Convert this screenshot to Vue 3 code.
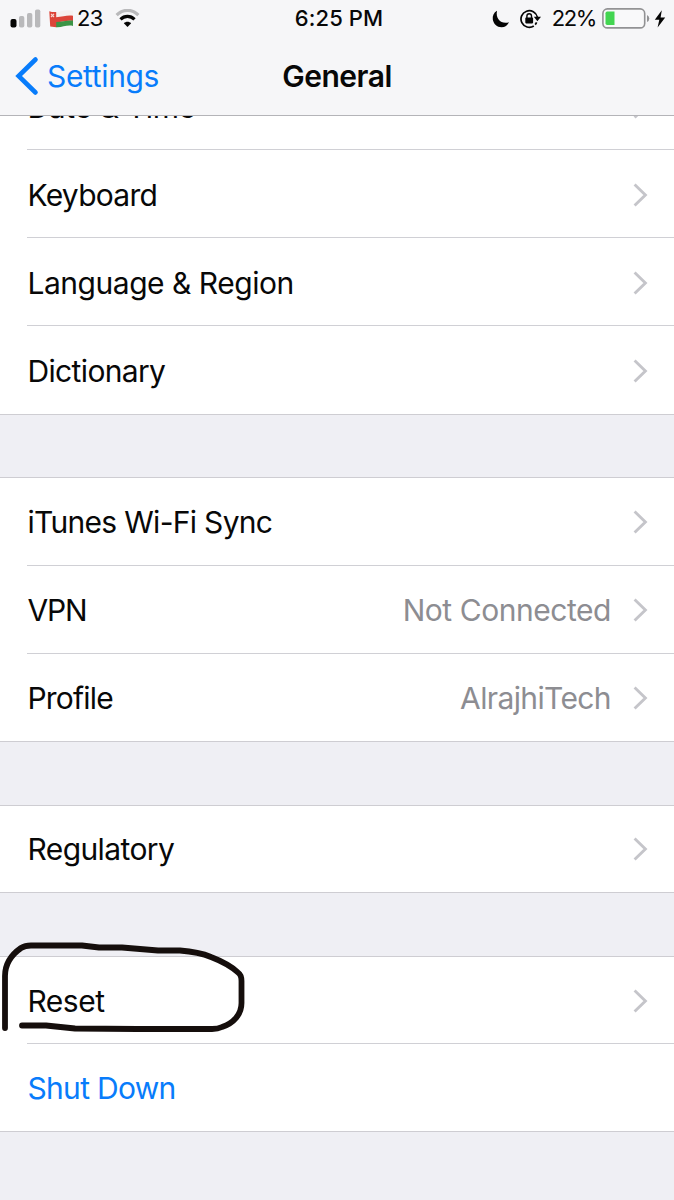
<script setup>
const groups = [
  {
    id: 'locale',
    rows: [
      { label: 'Date & Time', spacing: -0.35 },
      { label: 'Keyboard', spacing: -0.75 },
      { label: 'Language & Region', spacing: -0.48 },
      { label: 'Dictionary', spacing: -0.65 },
    ],
  },
  {
    id: 'network',
    rows: [
      { label: 'iTunes Wi-Fi Sync', spacing: -0.7 },
      { label: 'VPN', spacing: -1.2, value: 'Not Connected', valueSpacing: -0.45 },
      { label: 'Profile', spacing: -0.8, value: 'AlrajhiTech', valueSpacing: -0.62 },
    ],
  },
  { id: 'legal', rows: [{ label: 'Regulatory', spacing: -0.6 }] },
  {
    id: 'power',
    marked: true,
    rows: [
      { label: 'Reset', spacing: -0.5 },
      { label: 'Shut Down', spacing: -0.7, action: true },
    ],
  },
]
</script>

<template>
  <div class="screen">
    <header class="header">
      <div class="status">
        <div class="status-left">
          <svg class="signal" width="31" height="19" viewBox="0 0 31 19">
            <rect x="0.5" y="10" width="6" height="8.5" rx="2" fill="#050505" />
            <rect x="9" y="7" width="5.3" height="11.5" rx="1.8" fill="#b9b9bb" />
            <rect x="17" y="4" width="5.3" height="14.5" rx="1.8" fill="#b9b9bb" />
            <rect x="25" y="0.5" width="5.3" height="18" rx="1.8" fill="#b9b9bb" />
          </svg>
          <svg class="flag" width="25" height="19" viewBox="0 0 25 19">
            <path d="M0.5 2.5C6 4 9 3 13 2C17 1 21 0.8 24 1.8V7C18 6 14 8 7 8.5Z" fill="#f5f0ee" />
            <path d="M7 8.2C14 7.9 18 5.9 24 6.8V12C18 11 14 12.8 7 13.2Z" fill="#dc4438" />
            <path d="M7 13C14 12.7 18 10.8 24 11.6V17C18 15.5 13 18.8 7 18.2Z" fill="#3b9446" />
            <path d="M0.3 2.3C3 3.2 5 3.2 7.2 3V18.2L1.2 17.6Z" fill="#dc4438" />
            <path d="M2 4.8L5 8M5 4.8L2 8" stroke="#f8d8d2" stroke-width="1.1" />
          </svg>
          <span class="carrier">23</span>
          <svg class="wifi" width="25" height="19" viewBox="0 0 26 19" preserveAspectRatio="none">
            <path d="M1.7 6.2C8 -0.2 18 -0.2 24.3 6.2" fill="none" stroke="#b9b9bb" stroke-width="3.3" />
            <path d="M5.7 10.4C9.8 6.4 16.2 6.4 20.3 10.4" fill="none" stroke="#050505" stroke-width="3.3" />
            <path d="M13 18L9.2 14.2C11.3 12.2 14.7 12.2 16.8 14.2Z" fill="#050505" />
          </svg>
        </div>
        <span class="clock">6:25 PM</span>
        <div class="status-right">
          <svg class="moon" width="18" height="18" viewBox="0 0 18 18">
            <path d="M5 0.8C1.8 2.5 0.3 6 0.8 9.5C1.5 14 5 17.2 9.5 17.2C13 17.2 15.6 15.3 17 12.2C10.2 14.8 3.2 9.5 5 0.8Z" fill="#050505" />
          </svg>
          <svg class="lock" width="22" height="20" viewBox="0 0 22 20">
            <path d="M13.8 17A8.3 8.3 0 1 1 17.4 8.2" fill="none" stroke="#050505" stroke-width="1.7" />
            <path d="M13.8 7.8H21L17.4 12.2Z" fill="#050505" />
            <path d="M16.6 13.4A8.3 8.3 0 0 1 15.2 15.6" fill="none" stroke="#050505" stroke-width="1.7" />
            <rect x="5.3" y="8.6" width="7.8" height="5.8" rx="0.8" fill="#050505" />
            <path d="M6.9 9V7A2.3 2.3 0 0 1 11.5 7V9" fill="none" stroke="#050505" stroke-width="1.4" />
          </svg>
          <span class="percent">22%</span>
          <svg class="battery" width="48" height="21" viewBox="0 0 48 21">
            <rect x="0.9" y="0.9" width="41.8" height="19" rx="4.5" fill="#f9f9fa" stroke="#929294" stroke-width="1.6" />
            <path d="M5.2 3.5H12.5V17H5.2Q3.5 17 3.5 15.3V5.2Q3.5 3.5 5.2 3.5Z" fill="#43d551" />
            <path d="M45 7Q47.3 8 47.3 10.5T45 14Z" fill="#929294" />
          </svg>
          <svg class="bolt" width="12" height="18" viewBox="0 0 12 18">
            <path d="M7.8 0.3L0.8 9.8H5.3L3.6 17.5L11.2 7.5H6.6Z" fill="#050505" />
          </svg>
        </div>
      </div>
      <nav class="nav">
        <a class="back">
          <svg width="24" height="40" viewBox="0 0 24 40">
            <path d="M20.5 3.5L3.6 20L20.5 36.5" fill="none" stroke="#087cfb" stroke-width="4.6" stroke-linecap="round" stroke-linejoin="miter" />
          </svg>
          <span>Settings</span>
        </a>
        <h1 class="title">General</h1>
      </nav>
    </header>

    <main class="list">
      <section v-for="group in groups" :key="group.id" class="group" :class="group.id">
        <div v-for="row in group.rows" :key="row.label" class="row" :class="{ action: row.action }">
          <span class="label" :style="{ letterSpacing: row.spacing + 'px' }">{{ row.label }}</span>
          <span v-if="row.value" class="value" :style="{ letterSpacing: row.valueSpacing + 'px' }">{{ row.value }}</span>
          <svg v-if="!row.action" class="chevron" width="15" height="24" viewBox="0 0 15 24">
            <path d="M1.6 1.5L12.4 12L1.6 22.5" fill="none" stroke="#c5c5ca" stroke-width="2.9" />
          </svg>
        </div>
        <svg v-if="group.marked" class="scribble" width="260" height="110" viewBox="0 930 260 110">
          <path d="M5 1027V975C5 962 11 954 21 947Q25 944.5 31 944.5H82L99 946.5H122L158 949.5H180Q199 951 211 956Q229 963 238 971.5Q241.5 974 241.5 980V1002C241.5 1013 234 1022 222 1026Q218 1028 212 1028H137L75 1027.5L46 1024.5H22" fill="none" stroke="#150e0c" stroke-width="5.8" stroke-linecap="round" stroke-linejoin="round" />
        </svg>
      </section>
    </main>
  </div>
</template>

<style>
body {
  margin: 0;
  background: #efeff4;
}
</style>

<style scoped>
.screen {
  width: 674px;
  height: 1200px;
  overflow: hidden;
  background: #efeff4;
  color: #080808;
  font-family: Inter, "Liberation Sans", sans-serif;
}

.header {
  position: relative;
  z-index: 2;
  box-sizing: border-box;
  height: 116px;
  background: #f6f6f8;
  border-bottom: 1px solid #b4b4b8;
}

.status {
  display: grid;
  grid-template-columns: 1fr auto 1fr;
  align-items: center;
  height: 37px;
}

.status-left,
.status-right {
  display: flex;
  align-items: center;
}

.status-left {
  padding-left: 10px;
}

.status-right {
  justify-content: flex-end;
  padding-right: 8px;
}

.flag {
  margin-left: 8px;
}

.carrier,
.percent,
.clock {
  font-size: 22px;
  line-height: 37px;
}

.carrier {
  margin-left: 3px;
  letter-spacing: -0.7px;
}

.wifi {
  margin-left: 12px;
}

.clock {
  padding-left: 4px;
  font-weight: 500;
  letter-spacing: 0.1px;
}

.lock {
  margin-left: 10px;
}

.percent {
  margin-left: 10px;
  letter-spacing: -1.4px;
}

.battery {
  margin-left: 6px;
}

.bolt {
  margin-left: 4px;
}

.nav {
  display: grid;
  grid-template-columns: 1fr auto 1fr;
  align-items: center;
  height: 78px;
}

.back {
  display: flex;
  align-items: center;
  padding-left: 15px;
  color: #087cfb;
  font-size: 30px;
  line-height: 30px;
  letter-spacing: -0.35px;
}

.back span {
  margin-left: 8px;
}

.title {
  margin: 0;
  font-size: 30px;
  font-weight: 600;
  letter-spacing: -0.5px;
}

.list {
  display: flex;
  flex-direction: column;
  gap: 62px;
  margin-top: -55px;
}

.group {
  position: relative;
  background: #fff;
  border-top: 1px solid #cecdd2;
  border-bottom: 1px solid #cecdd2;
}

.row {
  display: flex;
  align-items: center;
  box-sizing: border-box;
  height: 88px;
  margin-left: 27px;
  padding-right: 26px;
  padding-left: 0.5px;
  border-bottom: 1px solid #d0d0d5;
  font-size: 30px;
  line-height: 30px;
}

.row:last-of-type {
  height: 87px;
  border-bottom: 0;
}

.locale .row {
  padding-top: 2px;
}

.locale .row:last-of-type {
  height: 88px;
  padding-top: 1px;
}

.legal {
  margin-top: 1px;
}

.legal .row:last-of-type {
  height: 86px;
}

.power {
  margin-top: 1px;
}

.power .row:first-of-type {
  height: 87px;
}

.power .row {
  padding-top: 1px;
}

.label {
  white-space: nowrap;
}

.value {
  margin-left: auto;
  color: #8d8d92;
}

.chevron {
  margin-left: auto;
}

.value + .chevron {
  margin-left: 22px;
}

.action {
  color: #087cfb;
}

.scribble {
  position: absolute;
  left: 0;
  top: -26px;
}
</style>
